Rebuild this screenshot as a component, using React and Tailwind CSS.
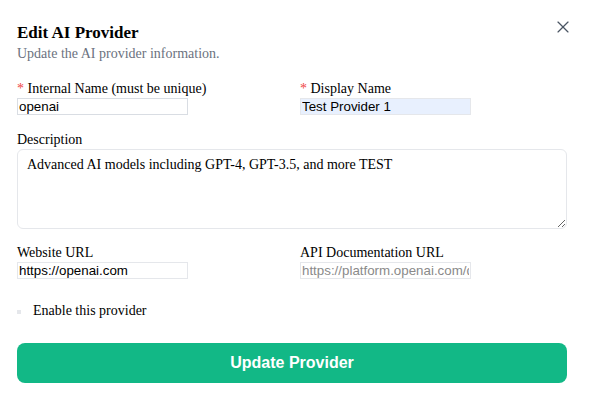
import React, { useState } from "react";
import { X } from "lucide-react";

const serif = "font-['Liberation_Serif',serif]";
const inputCls =
  "block h-[17px] w-[171px] border border-[#d9dde3] px-[1px] font-['Liberation_Sans',Arial,sans-serif] text-[13.33px] leading-[15px] text-black outline-none placeholder:text-[#8a8a8a]";

const Field = ({ label, required, children }) => (
  <div>
    <label className={`block text-[14px] leading-[18px] text-black ${serif}`}>
      {required && <span className="text-[#ef4444]">* </span>}
      {label}
    </label>
    {children}
  </div>
);

const App = () => {
  const [form, setForm] = useState({
    name: "openai",
    display_name: "Test Provider 1",
    description: "Advanced AI models including GPT-4, GPT-3.5, and more TEST",
    website_url: "https://openai.com",
    docs_url: "",
    enabled: false,
  });

  const handleChange = (event) => {
    const { name, value, type, checked } = event.target;
    setForm((prev) => ({ ...prev, [name]: type === "checkbox" ? checked : value }));
  };

  return (
    <div className={`relative min-h-[401px] w-[589px] bg-white pl-[17px] pr-[22px] pt-[25px] ${serif}`}>
      <button
        type="button"
        className="absolute right-[16px] top-[17px] text-[#4b5563]"
        aria-label="Close"
      >
        <X size={20} strokeWidth={1.4} />
      </button>

      <h2 className="text-[17px] font-bold leading-[16px] text-black">Edit AI Provider</h2>
      <p className="mt-[4px] text-[14px] leading-[18px] text-[#6b7280]">
        Update the AI provider information.
      </p>

      <div className="mt-[17px] grid grid-cols-2 gap-x-4">
        <Field label="Internal Name (must be unique)" required>
          <input name="name" value={form.name} onChange={handleChange} className={inputCls} />
        </Field>
        <Field label="Display Name" required>
          <input
            name="display_name"
            value={form.display_name}
            onChange={handleChange}
            className={`${inputCls} border-[#e5e7eb] bg-[#e8f0fe]`}
          />
        </Field>
      </div>

      <div className="mt-[16px]">
        <Field label="Description">
          <textarea
            name="description"
            value={form.description}
            onChange={handleChange}
            className={`block h-[80px] w-full rounded-md border border-[#e5e7eb] px-[9px] pt-[6px] text-[14px] leading-[18px] text-black outline-none ${serif}`}
          />
        </Field>
      </div>

      <div className="mt-[15px] grid grid-cols-2 gap-x-4">
        <Field label="Website URL">
          <input
            name="website_url"
            value={form.website_url}
            onChange={handleChange}
            className={`${inputCls} border-[#e5e7eb]`}
          />
        </Field>
        <Field label="API Documentation URL">
          <input
            name="docs_url"
            value={form.docs_url}
            onChange={handleChange}
            placeholder="https://platform.openai.com/docs"
            className={`${inputCls} border-[#e5e7eb]`}
          />
        </Field>
      </div>

      <label className="mt-[23px] flex items-center text-[14px] leading-[18px] text-black">
        <span className="mr-[12px] mt-[1px] block h-[4px] w-[4px] bg-[#e5e7eb]" />
        Enable this provider
      </label>

      <button
        type="submit"
        className="mt-[23px] flex h-[40px] w-full items-center justify-center rounded-lg bg-[#12b886] font-['Liberation_Sans',Arial,sans-serif] text-[16px] font-bold text-white"
      >
        Update Provider
      </button>
    </div>
  );
};

export default App;
